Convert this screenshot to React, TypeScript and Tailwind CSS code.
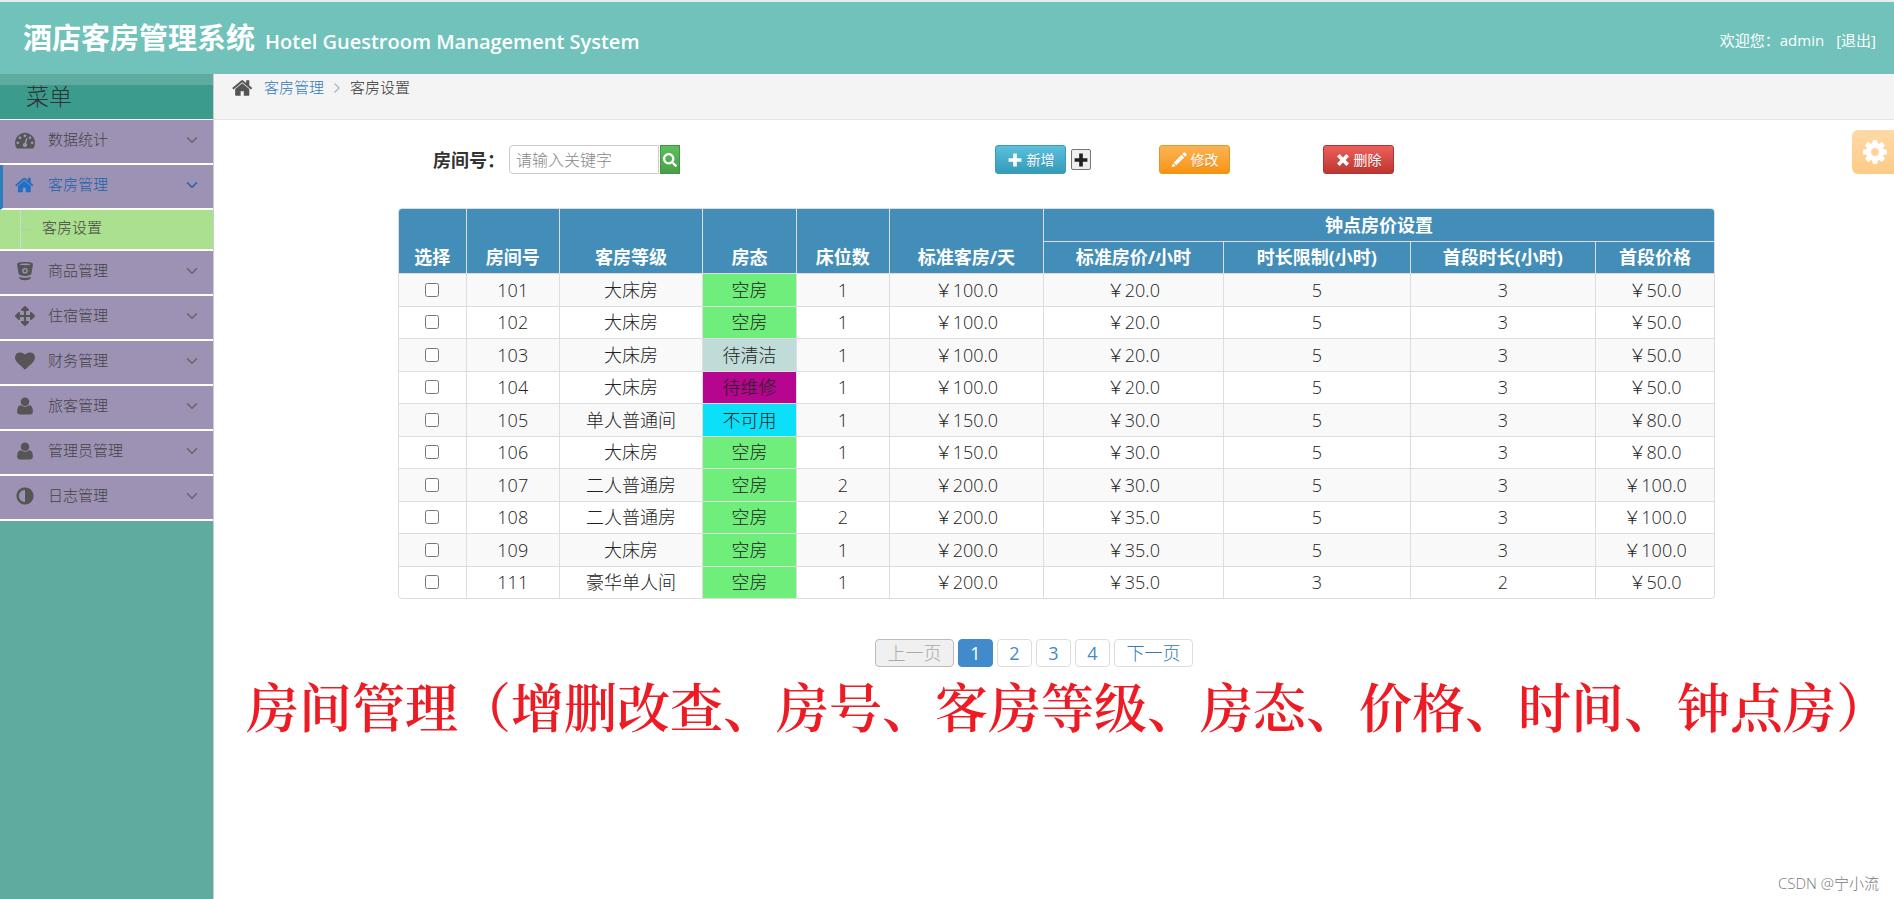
import { useState } from 'react';
import { FaArrowsAlt, FaSearch } from 'react-icons/fa';
import { ChevronDown, ChevronRight } from 'lucide-react';

type IconProps = { className?: string };

const paths = {
    home: 'M1408 992v480q0 26-19 45t-45 19h-384v-384h-256v384h-384q-26 0-45-19t-19-45v-480q0-1 .5-3t.5-3l575-474 575 474q1 2 1 6zm223-69l-62 74q-8 9-21 11h-3q-13 0-21-7l-692-577-692 577q-12 8-24 7-13-2-21-11l-62-74q-8-10-7-23.5t11-21.5l719-599q32-26 76-26t76 26l244 204v-195q0-14 9-23t23-9h192q14 0 23 9t9 23v408l219 182q10 8 11 21.5t-7 23.5z',
    dashboard:
        'M384 1152q0-53-37.5-90.5t-90.5-37.5-90.5 37.5-37.5 90.5 37.5 90.5 90.5 37.5 90.5-37.5 37.5-90.5zm192-448q0-53-37.5-90.5t-90.5-37.5-90.5 37.5-37.5 90.5 37.5 90.5 90.5 37.5 90.5-37.5 37.5-90.5zm428 481l101-382q6-26-7.5-48.5t-38.5-29.5-48 6.5-30 39.5l-101 382q-60 5-107 43.5t-63 98.5q-20 77 20 146t117 89 146-20 89-117q16-60-6-117t-72-91zm660-33q0-53-37.5-90.5t-90.5-37.5-90.5 37.5-37.5 90.5 37.5 90.5 90.5 37.5 90.5-37.5 37.5-90.5zm-640-640q0-53-37.5-90.5t-90.5-37.5-90.5 37.5-37.5 90.5 37.5 90.5 90.5 37.5 90.5-37.5 37.5-90.5zm448 192q0-53-37.5-90.5t-90.5-37.5-90.5 37.5-37.5 90.5 37.5 90.5 90.5 37.5 90.5-37.5 37.5-90.5zm320 448q0 261-141 483-19 29-54 29h-1402q-35 0-54-29-141-221-141-483 0-182 71-348t191-286 286-191 348-71 348 71 286 191 191 286 71 348z',
    heart: 'M896 1664q-26 0-44-18l-624-602q-10-8-27.5-26t-55.5-65.5-68-97.5-53.5-121-23.5-138q0-220 127-344t351-124q62 0 126.5 21.5t120 58 95.5 68.5 76 68q36-36 76-68t95.5-68.5 120-58 126.5-21.5q224 0 351 124t127 344q0 221-229 450l-623 600q-18 18-44 18z',
    user: 'M1600 1405q0 120-73 189.5t-194 69.5h-874q-121 0-194-69.5t-73-189.5q0-53 3.500-103.500t14-109 26.500-108.500 43-97.500 62-81 85.500-53.500 111.500-20q9 0 42 21.500t74.500 48 108 48 133.500 21.500 133.500-21.500 108-48 74.500-48 42-21.500q61 0 111.500 20t85.500 53.500 62 81 43 97.500 26.500 108.500 14 109 3.500 103.500zm-320-893q0 159-112.500 271.500t-271.500 112.500-271.500-112.500-112.500-271.500 112.500-271.500 271.500-112.500 271.500 112.500 112.500 271.500z',
    adjust: 'M896 1440v-1088q-148 0-273 73t-198 198-73 273 73 273 198 198 273 73zm768-544q0 209-103 385.5t-279.5 279.5-385.5 103-385.5-103-279.5-279.5-103-385.5 103-385.5 279.5-279.5 385.5-103 385.5 103 279.5 279.5 103 385.5z',
    cog: 'M1152 896q0-106-75-181t-181-75-181 75-75 181 75 181 181 75 181-75 75-181zm512-109v222q0 12-8 23t-20 13l-185 28q-19 54-39 91 35 50 107 138 10 12 10 25t-9 23q-27 37-99 108t-94 71q-12 0-26-9l-138-108q-44 23-91 38-16 136-29 186-7 28-36 28h-222q-14 0-24.5-8.5t-11.5-21.5l-28-184q-49-16-90-37l-141 107q-10 9-25 9-14 0-25-11-126-114-165-168-7-10-7-23 0-12 8-23 15-21 51-66.5t54-70.5q-27-50-41-99l-183-27q-13-2-21-12.5t-8-23.5v-222q0-12 8-23t19-13l186-28q14-46 39-92-40-57-107-138-10-12-10-24 0-10 9-23 26-36 98.5-107.5t94.5-71.5q13 0 26 10l138 107q44-23 91-38 16-136 29-186 7-28 36-28h222q14 0 24.5 8.5t11.5 21.5l28 184q49 16 90 37l142-107q9-9 24-9 13 0 25 10 129 119 165 170 7 8 7 22 0 12-8 23-15 21-51 66.5t-54 70.5q26 50 41 98l183 28q13 2 21 12.5t8 23.5z',
};

function Glyph({ d, className }: IconProps & { d: string }) {
    return (
        <svg viewBox="0 0 1792 1792" fill="currentColor" className={className} aria-hidden="true">
            <path d={d} />
        </svg>
    );
}

const HomeIcon = (p: IconProps) => <Glyph d={paths.home} {...p} />;
const DashboardIcon = (p: IconProps) => <Glyph d={paths.dashboard} {...p} />;
const HeartIcon = (p: IconProps) => <Glyph d={paths.heart} {...p} />;
const UserIcon = (p: IconProps) => <Glyph d={paths.user} {...p} />;
const AdjustIcon = (p: IconProps) => <Glyph d={paths.adjust} {...p} />;
const CogIcon = (p: IconProps) => <Glyph d={paths.cog} {...p} />;

function SmallGlyph({ d, className }: IconProps & { d: string }) {
    return (
        <svg viewBox="0 0 14 14" fill="currentColor" className={className} aria-hidden="true">
            <path d={d} />
        </svg>
    );
}

const PlusIcon = (p: IconProps) => <SmallGlyph d="M5.400 1.400h3.200v4h4v3.200h-4v4H5.400v-4h-4V5.400h4z" {...p} />;
const PencilIcon = (p: IconProps) => (
    <SmallGlyph d="M11.200.5q.6-.5 1.200.1l1 1q.6.600.1 1.200l-1.300 1.300-2.300-2.300zM9.200 2.500l2.300 2.300-6.900 6.900-2.300-2.300zM1.700 10l2.300 2.300-3.400 1.100z" {...p} />
);
const RemoveIcon = (p: IconProps) => (
    <SmallGlyph d="M3.600 1L7 4.400 10.400 1 13 3.600 9.600 7l3.400 3.400-2.600 2.600L7 9.600 3.600 13 1 10.400 4.400 7 1 3.600z" {...p} />
);

function BucketIcon({ className }: IconProps) {
    return (
        <svg viewBox="0 0 20 20" fill="currentColor" fillRule="evenodd" className={className} aria-hidden="true">
            <path d="M2 3.200C2 1.600 5.500 1 10 1s8 .6 8 2.200l-1.600 9.600c-.4 1.500-3.200 2.100-6.400 2.100s-6-.6-6.400-2.100zM4.200 3.300c1 .7 3.400.9 5.800.9s4.800-.2 5.800-.9c-1-.7-3.400-.9-5.800-.9s-4.800.2-5.800.9zM10 7a2.800 2.800 0 1 0 0 5.600A2.800 2.800 0 0 0 10 7z" />
            <circle cx="10" cy="9.800" r="1.400" />
            <path d="M4 15.700c1.500 .7 3.600 1 6 1s4.500-.3 6-1l-.6 1.900c-.4 1-2.700 1.700-5.400 1.700s-5-.7-5.400-1.700z" />
        </svg>
    );
}

const menuItems = [
    { label: '数据统计', icon: DashboardIcon },
    { label: '客房管理', icon: HomeIcon, active: true, children: ['客房设置'] },
    { label: '商品管理', icon: BucketIcon },
    { label: '住宿管理', icon: FaArrowsAlt },
    { label: '财务管理', icon: HeartIcon },
    { label: '旅客管理', icon: UserIcon },
    { label: '管理员管理', icon: UserIcon },
    { label: '日志管理', icon: AdjustIcon },
];

const stateColors: Record<string, string> = {
    空房: 'bg-[#6fee7b]',
    待清洁: 'bg-[#c0dcd8]',
    待维修: 'bg-[#b6058f]',
    不可用: 'bg-[#0be0f8]',
};

const rooms = [
    { no: '101', level: '大床房', state: '空房', beds: 1, day: '100.0', hour: '20.0', limit: 5, first: 3, firstPrice: '50.0' },
    { no: '102', level: '大床房', state: '空房', beds: 1, day: '100.0', hour: '20.0', limit: 5, first: 3, firstPrice: '50.0' },
    { no: '103', level: '大床房', state: '待清洁', beds: 1, day: '100.0', hour: '20.0', limit: 5, first: 3, firstPrice: '50.0' },
    { no: '104', level: '大床房', state: '待维修', beds: 1, day: '100.0', hour: '20.0', limit: 5, first: 3, firstPrice: '50.0' },
    { no: '105', level: '单人普通间', state: '不可用', beds: 1, day: '150.0', hour: '30.0', limit: 5, first: 3, firstPrice: '80.0' },
    { no: '106', level: '大床房', state: '空房', beds: 1, day: '150.0', hour: '30.0', limit: 5, first: 3, firstPrice: '80.0' },
    { no: '107', level: '二人普通房', state: '空房', beds: 2, day: '200.0', hour: '30.0', limit: 5, first: 3, firstPrice: '100.0' },
    { no: '108', level: '二人普通房', state: '空房', beds: 2, day: '200.0', hour: '35.0', limit: 5, first: 3, firstPrice: '100.0' },
    { no: '109', level: '大床房', state: '空房', beds: 1, day: '200.0', hour: '35.0', limit: 5, first: 3, firstPrice: '100.0' },
    { no: '111', level: '豪华单人间', state: '空房', beds: 1, day: '200.0', hour: '35.0', limit: 3, first: 2, firstPrice: '50.0' },
];

const leadingHeads = ['选择', '房间号', '客房等级', '房态', '床位数', '标准客房/天'];

const actionClass =
    'flex h-[29px] w-[71px] items-center justify-center gap-1 rounded-[3px] border bg-linear-to-b text-sm font-normal text-white text-shadow-2xs';

function Header() {
    return (
        <header className="flex h-[74px] items-center justify-between border-t-2 border-[#e4eeed] bg-[#70c2bb] pr-[18px] pl-[23px] text-white">
            <h1 className="flex items-baseline gap-[10px] font-bold">
                <span className="text-[29px]">酒店客房管理系统</span>
                <span className="text-xl font-semibold">Hotel Guestroom Management System</span>
            </h1>
            <div className="flex gap-3 pt-1 text-[15px] font-normal">
                <span>欢迎您：admin</span>
                <a href="#logout">[退出]</a>
            </div>
        </header>
    );
}

function Sidebar() {
    return (
        <aside className="w-[214px] shrink-0 border-r border-[#ccc] bg-[#5faba0] pt-[11px] text-[15px] text-[#444]">
            <h2 className="flex h-[35px] items-center border-b border-white bg-[#3b9c8e] pb-3 pl-[26px] text-[23px] text-[#333]">
                菜单
            </h2>
            <ul>
                {menuItems.map((item) => (
                    <li key={item.label}>
                        <a
                            href="#menu"
                            className={`flex h-[45px] items-center border-b-2 border-white bg-[#9d91b4] pr-3 pb-1 ${
                                item.active ? 'border-l-3 border-l-[#2b7dbc] pl-3 text-[#1963aa]' : 'pl-[15px]'
                            }`}
                        >
                            <span className={`flex w-[33px] ${item.active ? 'text-[#1f6fc4]' : 'text-[#555]'}`}>
                                <item.icon className="size-5" />
                            </span>
                            <span className="flex-1">{item.label}</span>
                            <ChevronDown className={`size-[18px] ${item.active ? '' : 'text-[#666]'}`} strokeWidth={2} />
                        </a>
                        {item.children?.map((child) => (
                            <a
                                key={child}
                                href="#rooms"
                                className="flex h-[41px] items-center border-b-2 border-white bg-[#aae08e] pl-5"
                            >
                                <span className="h-full border-l border-[#ccd7e2]" />
                                <span className="mr-3 w-[9px] border-t border-[#b5c9ad]" />
                                <span className="pb-1">{child}</span>
                            </a>
                        ))}
                    </li>
                ))}
            </ul>
        </aside>
    );
}

function RoomTable() {
    return (
        <div className="mr-[179px] ml-[184px] overflow-hidden rounded-[4px] border border-[#ddd]">
            <table className="w-full table-fixed border-collapse text-center text-lg leading-6 text-[#222] [&_td]:border [&_td]:border-[#ddd] [&_td]:p-0 [&_th]:border [&_th]:border-[#ddd] [&_th]:p-0 [&_tr>*:first-child]:border-l-0 [&_tr>*:last-child]:border-r-0">
                <colgroup>
                    <col className="w-[5.1%]" />
                    <col className="w-[7.1%]" />
                    <col className="w-[10.9%]" />
                    <col className="w-[7.1%]" />
                    <col className="w-[7.1%]" />
                    <col className="w-[11.7%]" />
                    <col className="w-[13.7%]" />
                    <col className="w-[14.2%]" />
                    <col className="w-[14.1%]" />
                    <col className="w-[9%]" />
                </colgroup>
                <thead className="bg-[#438eb9] text-white [&_tr:first-child>*]:border-t-0">
                    <tr className="h-8">
                        {leadingHeads.map((head) => (
                            <th key={head} rowSpan={2} className="align-bottom">
                                <div className="pb-1">{head}</div>
                            </th>
                        ))}
                        <th colSpan={4}>钟点房价设置</th>
                    </tr>
                    <tr className="h-8">
                        <th className="border-l!">标准房价/小时</th>
                        <th>时长限制(小时)</th>
                        <th>首段时长(小时)</th>
                        <th>首段价格</th>
                    </tr>
                </thead>
                <tbody className="[&_tr:last-child>*]:border-b-0">
                    {rooms.map((room) => (
                        <tr key={room.no} className="odd:h-[33px] odd:bg-[#f9f9f9] even:h-8 last:h-[33px]">
                            <td>
                                <input type="checkbox" aria-label={`选择 ${room.no}`} className="mx-auto block size-[14px]" />
                            </td>
                            <td>{room.no}</td>
                            <td>{room.level}</td>
                            <td className={stateColors[room.state]}>{room.state}</td>
                            <td>{room.beds}</td>
                            <td>￥{room.day}</td>
                            <td>￥{room.hour}</td>
                            <td>{room.limit}</td>
                            <td>{room.first}</td>
                            <td>￥{room.firstPrice}</td>
                        </tr>
                    ))}
                </tbody>
            </table>
        </div>
    );
}

function Pagination() {
    const [page, setPage] = useState(1);
    const base = 'flex h-7 items-center justify-center rounded-[4px] border text-lg';

    return (
        <nav className="flex justify-center gap-1 pt-10 pr-10">
            <button
                disabled={page === 1}
                onClick={() => setPage(page - 1)}
                className={`${base} w-[79px] border-[#ddd] text-[#337ab7] disabled:border-[#bbb] disabled:bg-[#f0f0f0] disabled:text-[#aaa]`}
            >
                上一页
            </button>
            {[1, 2, 3, 4].map((n) => (
                <button
                    key={n}
                    onClick={() => setPage(n)}
                    className={`${base} w-[35px] font-normal ${
                        n === page ? 'border-[#428bca] bg-[#428bca] text-white' : 'border-[#ddd] text-[#428bca]'
                    }`}
                >
                    {n}
                </button>
            ))}
            <button
                disabled={page === 4}
                onClick={() => setPage(page + 1)}
                className={`${base} w-[79px] border-[#ddd] text-[#337ab7]`}
            >
                下一页
            </button>
        </nav>
    );
}

export default function App() {
    const [keyword, setKeyword] = useState('');

    return (
        <div className="relative flex min-h-screen flex-col bg-white font-['Open_Sans','Noto_Sans_CJK_SC',sans-serif] font-light">
            <Header />
            <div className="flex flex-1">
                <Sidebar />
                <main className="min-w-0 flex-1">
                    <div className="flex h-[46px] items-center border-b border-[#e5e5e5] bg-[#f4f4f4] pb-[18px] pl-[18px] text-[15px] text-[#333]">
                        <HomeIcon className="mr-[10px] size-[22px] text-[#555]" />
                        <a href="#rooms" className="text-[#337ab7]">
                            客房管理
                        </a>
                        <ChevronRight className="mx-[5px] size-4 text-[#b2b6bf]" />
                        <span>客房设置</span>
                    </div>

                    <div className="flex h-[88px] items-start pt-[25px] pl-[219px]">
                        <form className="flex w-[562px] items-center" onSubmit={(e) => e.preventDefault()}>
                            <label htmlFor="roomNo" className="w-[76px] text-lg leading-7 font-bold whitespace-nowrap text-[#333]">
                                房间号：
                            </label>
                            <input
                                id="roomNo"
                                type="text"
                                placeholder="请输入关键字"
                                value={keyword}
                                onChange={(e) => setKeyword(e.target.value)}
                                className="h-[29px] w-[150px] rounded-l-[4px] border border-[#ccc] px-[6px] text-base text-[#555] placeholder:text-[#888]"
                            />
                            <button
                                type="submit"
                                aria-label="搜索"
                                className="ml-px flex h-[29px] w-5 items-center justify-center border border-[#419641] bg-linear-to-b from-[#5cc05c] to-[#4a9f4a] text-white"
                            >
                                <FaSearch className="size-[14px]" />
                            </button>
                        </form>
                        <button className={`${actionClass} border-[#3d9bb5] from-[#5bc0de] to-[#339bb9]`}>
                            <PlusIcon className="size-4" />
                            新增
                        </button>
                        <button
                            aria-label="添加"
                            className="mt-1 mr-[68px] ml-[5px] flex h-[21px] w-5 items-center justify-center rounded-[2px] border border-[#767676] bg-[#efefef] text-[#222]"
                        >
                            <PlusIcon className="size-4" />
                        </button>
                        <button className={`${actionClass} mr-[93px] border-[#e59728] from-[#fbb450] to-[#f89406]`}>
                            <PencilIcon className="size-4" />
                            修改
                        </button>
                        <button className={`${actionClass} border-[#b3322e] from-[#ee5f5b] to-[#bd362f]`}>
                            <RemoveIcon className="size-[14px]" />
                            删除
                        </button>
                    </div>

                    <RoomTable />
                    <Pagination />

                    <p className="pl-8 text-[53px] leading-[76px] font-semibold whitespace-nowrap text-[#ed1c24] [font-family:'Noto_Serif_CJK_SC','Noto_Sans_CJK_SC',serif]">
                        房间管理（增删改查、房号、客房等级、房态、价格、时间、钟点房）
                    </p>
                </main>
            </div>

            <button
                aria-label="设置"
                className="absolute top-[130px] right-0 flex h-11 w-[42px] items-center justify-center rounded-l-[6px] bg-linear-to-b from-[#ffd9a6] to-[#fecb86] pl-1 text-white"
            >
                <CogIcon className="size-7" />
            </button>
            <span className="absolute right-[15px] bottom-[5px] text-[15px] text-[#777]">CSDN @宁小流</span>
        </div>
    );
}
